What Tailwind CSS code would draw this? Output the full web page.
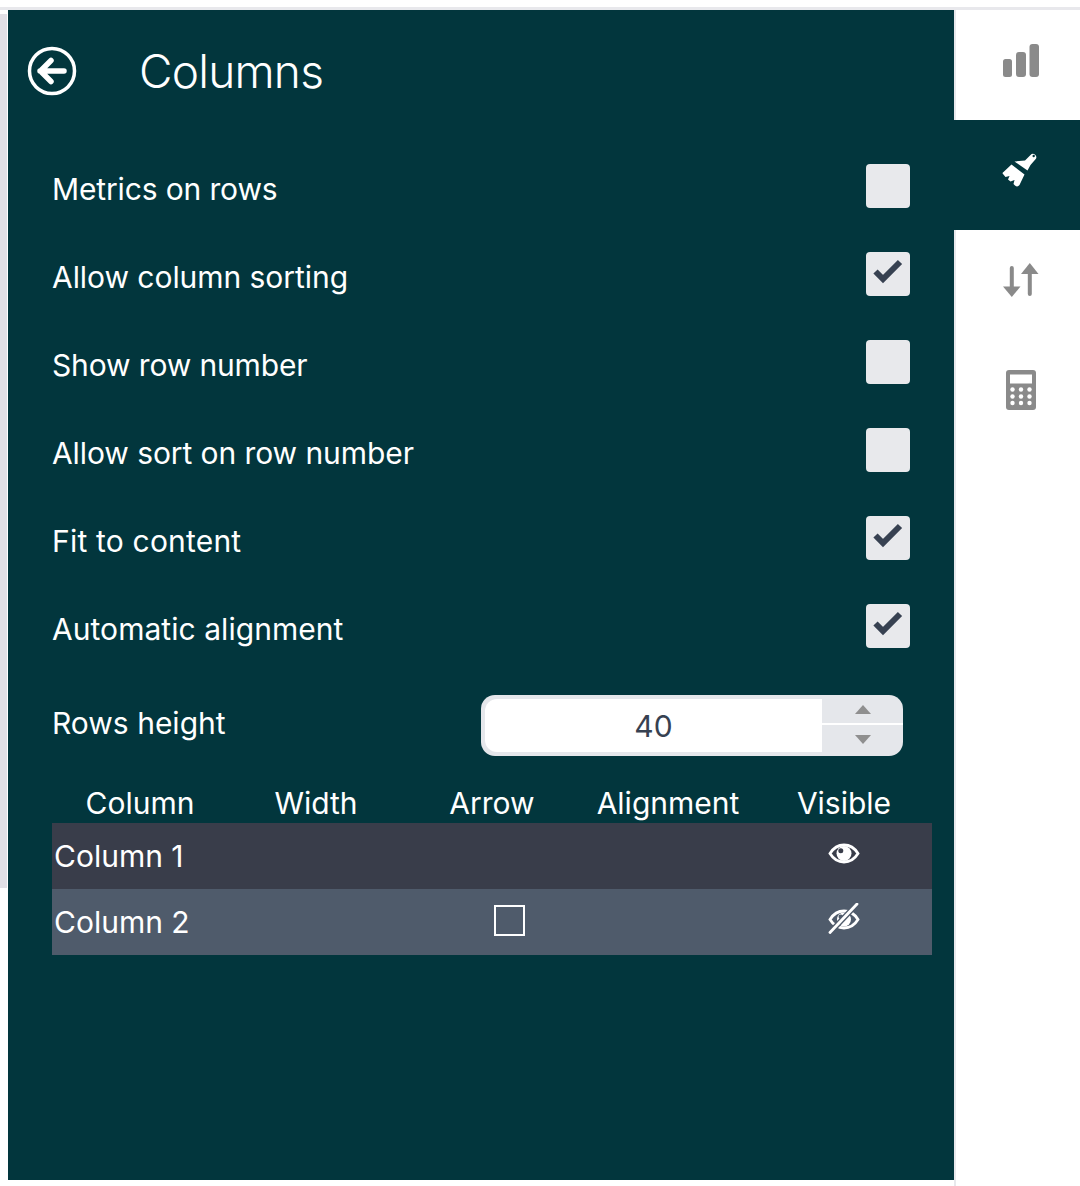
<!DOCTYPE html>
<html lang="en">
<head>
  <meta charset="UTF-8">
  <title>Columns</title>
  <script src="https://cdn.jsdelivr.net/npm/@tailwindcss/browser@4"></script>
</head>
<body class="bg-white font-['Inter',sans-serif]">
  <div class="w-[1080px] h-[1186px] overflow-hidden">
    <div class="h-[7px]"></div>
    <div class="h-[3px] bg-[#e8e8ec]"></div>
    <div class="flex">
      <!-- sliver of the page behind -->
      <div class="w-[8px] pt-[4px]">
        <div class="w-[7px] h-[874px] bg-[#e2e0e6]"></div>
      </div>

      <!-- settings panel -->
      <div class="w-[946px] h-[1170px] bg-[#02363d] text-white">
        <div class="h-[132px] flex items-center pl-[19px] pb-[10px]">
          <svg class="w-[50px] h-[50px]" viewBox="0 0 50 50" fill="none" stroke="white">
            <circle cx="25" cy="25" r="22.5" stroke-width="3.5"/>
            <path d="M37 25H13M24 14.5 13.5 25 24 35.5" stroke-width="5.5" stroke-linecap="round" stroke-linejoin="round"/>
          </svg>
          <h1 class="ml-[62px] text-[46px] font-light tracking-[-0.77px]">Columns</h1>
        </div>

        <div class="pl-[44px] pr-[44px] text-[30px]">
          <div class="h-[88px] flex justify-between items-center">
            <span class="pt-[6px] tracking-[-0.14px]">Metrics on rows</span>
            <span class="w-[44px] h-[44px] rounded-[4px] bg-[#e8e9ec]"></span>
          </div>
          <div class="h-[88px] flex justify-between items-center">
            <span class="pt-[6px] tracking-[-0.05px]">Allow column sorting</span>
            <span class="w-[44px] h-[44px] rounded-[4px] bg-[#e8e9ec] flex items-center justify-center">
              <svg class="w-[32px] h-[32px] mb-[6px] mr-[2px]" viewBox="0 0 32 32" fill="none" stroke="#374151" stroke-width="6"><path d="M4.500 16.500 12 24 29 7"/></svg>
            </span>
          </div>
          <div class="h-[88px] flex justify-between items-center">
            <span class="pt-[6px] tracking-[-0.14px]">Show row number</span>
            <span class="w-[44px] h-[44px] rounded-[4px] bg-[#e8e9ec]"></span>
          </div>
          <div class="h-[88px] flex justify-between items-center">
            <span class="pt-[6px] tracking-[-0.08px]">Allow sort on row number</span>
            <span class="w-[44px] h-[44px] rounded-[4px] bg-[#e8e9ec]"></span>
          </div>
          <div class="h-[88px] flex justify-between items-center">
            <span class="pt-[6px] tracking-[0.2px]">Fit to content</span>
            <span class="w-[44px] h-[44px] rounded-[4px] bg-[#e8e9ec] flex items-center justify-center">
              <svg class="w-[32px] h-[32px] mb-[6px] mr-[2px]" viewBox="0 0 32 32" fill="none" stroke="#374151" stroke-width="6"><path d="M4.500 16.500 12 24 29 7"/></svg>
            </span>
          </div>
          <div class="h-[88px] flex justify-between items-center">
            <span class="pt-[6px] tracking-[0.05px]">Automatic alignment</span>
            <span class="w-[44px] h-[44px] rounded-[4px] bg-[#e8e9ec] flex items-center justify-center">
              <svg class="w-[32px] h-[32px] mb-[6px] mr-[2px]" viewBox="0 0 32 32" fill="none" stroke="#374151" stroke-width="6"><path d="M4.500 16.500 12 24 29 7"/></svg>
            </span>
          </div>

          <div class="h-[61px] mt-[25px] flex justify-between items-center">
            <span class="mb-[4px]">Rows height</span>
            <div class="w-[422px] h-[61px] mr-[7px] rounded-[14px] bg-[#e5e7eb] flex overflow-hidden">
              <div class="w-[337px] h-[53px] ml-[4px] mt-[4px] rounded-l-[12px] bg-white text-[#374151] flex items-center justify-center pt-[2px]">40</div>
              <div class="flex-1 flex flex-col">
                <div class="h-[28px] flex items-center justify-center">
                  <svg class="w-[16px] h-[9px]" viewBox="0 0 16 9" fill="#8f8f8f"><path d="M8 0l8 9H0z"/></svg>
                </div>
                <div class="h-[2px] bg-white"></div>
                <div class="flex-1 flex items-center justify-center pb-[3px]">
                  <svg class="w-[16px] h-[9px]" viewBox="0 0 16 9" fill="#8f8f8f"><path d="M0 0h16l-8 9z"/></svg>
                </div>
              </div>
            </div>
          </div>

          <table class="w-[880px] table-fixed mt-[27px] border-collapse">
            <thead>
              <tr class="h-[40px] leading-[40px]">
                <th class="font-normal p-0">Column</th>
                <th class="font-normal p-0">Width</th>
                <th class="font-normal p-0">Arrow</th>
                <th class="font-normal p-0">Alignment</th>
                <th class="font-normal p-0">Visible</th>
              </tr>
            </thead>
            <tbody>
              <tr class="h-[66px] bg-[#393d4a]">
                <td class="pl-[2px]">Column 1</td>
                <td></td>
                <td></td>
                <td></td>
                <td>
                  <svg class="block mx-auto mb-[6px] w-[32px] h-[32px]" viewBox="0 0 32 32" fill="none" stroke="white">
                    <path d="M2 16.500C6 10 11 8 16 8s10 2 14 8.500c-4 6.500-9 8.500-14 8.500s-10-2-14-8.500z" stroke-width="2.800"/>
                    <circle cx="16" cy="16.500" r="7.500" fill="white" stroke="none"/>
                    <circle cx="12.800" cy="13.800" r="2.500" fill="#393d4a" stroke="none"/>
                  </svg>
                </td>
              </tr>
              <tr class="h-[66px] bg-[#4f5b6b]">
                <td class="pl-[2px]">Column 2</td>
                <td></td>
                <td>
                  <span class="block w-[31px] h-[31px] ml-[90px] mb-[3px] border-2 border-white"></span>
                </td>
                <td></td>
                <td>
                  <svg class="block mx-auto mb-[6px] w-[32px] h-[32px]" viewBox="0 0 32 32" fill="none" stroke="white">
                    <path d="M2 16.500C6 10 11 8 16 8s10 2 14 8.500c-4 6.500-9 8.500-14 8.500s-10-2-14-8.500z" stroke-width="2.800"/>
                    <circle cx="16" cy="16.500" r="7" fill="white" stroke="none"/>
                    <circle cx="12.800" cy="13.800" r="2.300" fill="#4f5b6b" stroke="none"/>
                    <path d="M2 29.500 29 1" stroke="#4f5b6b" stroke-width="5.500"/>
                    <path d="M2 29.500 29 1" stroke-width="2.800" stroke-linecap="round"/>
                  </svg>
                </td>
              </tr>
            </tbody>
          </table>
        </div>
      </div>

      <!-- side tabs -->
      <div class="w-[126px] h-[1176px] border-l-2 border-[#e8e8ec]">
        <div class="h-[110px] flex items-center justify-center pb-[8px] pl-[6px]">
          <svg class="w-[36px] h-[34px]" viewBox="0 0 36 34" fill="#8a8a8a">
            <rect x="0" y="15" width="9" height="18" rx="2.500"/>
            <rect x="13" y="8" width="10" height="25" rx="3"/>
            <rect x="26.500" y="0" width="9.500" height="33" rx="3"/>
          </svg>
        </div>
        <div class="h-[110px] bg-[#02363d] ml-[-2px] flex items-center justify-center pb-[8px] pl-[6px]">
          <svg class="w-[36px] h-[36px] overflow-visible" viewBox="0 0 36 36" fill="white">
            <path fill-rule="evenodd" d="M12.500 8.500 23 7.500l5.500-5.500a3.200 3.200 0 0 1 4.800 4.500L28.500 12 25.500 17.500zM31.700 1.800a1.200 1.200 0 1 0 0 2.400 1.200 1.200 0 0 0 0-2.400z"/>
            <path d="M9.500 11.500 22.500 21.500 17.500 32Q15.500 34.500 13 32.500L11.500 31 12.500 27 8.500 28.500 6 26.500 7.500 23 3.500 24 1 21Q0 20 1.500 19z"/>
          </svg>
        </div>
        <div class="h-[110px] flex items-center justify-center pb-[10px] pl-[6px]">
          <svg class="w-[36px] h-[35px]" viewBox="0 0 36 35" fill="#8a8a8a">
            <rect x="6.800" y="3" width="4" height="24" rx="2"/>
            <path d="M0 23.500h17.500L8.800 34z"/>
            <rect x="24.800" y="6" width="4" height="27" rx="2"/>
            <path d="M18 11h17.500L26.800 0z"/>
          </svg>
        </div>
        <div class="h-[110px] flex items-center justify-center pb-[10px] pl-[6px]">
          <svg class="w-[30px] h-[40px]" viewBox="0 0 30 40">
            <rect width="30" height="40" rx="3" fill="#8a8a8a"/>
            <rect x="4" y="4.500" width="22" height="9" fill="white"/>
            <g fill="white">
              <circle cx="6.500" cy="19.500" r="2.200"/><circle cx="15" cy="19.500" r="2.200"/><circle cx="23.500" cy="19.500" r="2.200"/>
              <circle cx="6.500" cy="26.500" r="2.200"/><circle cx="15" cy="26.500" r="2.200"/><circle cx="23.500" cy="26.500" r="2.200"/>
              <circle cx="6.500" cy="33" r="2.200"/><circle cx="15" cy="33" r="2.200"/><circle cx="23.500" cy="33" r="2.200"/>
            </g>
          </svg>
        </div>
      </div>
    </div>
  </div>
</body>
</html>
